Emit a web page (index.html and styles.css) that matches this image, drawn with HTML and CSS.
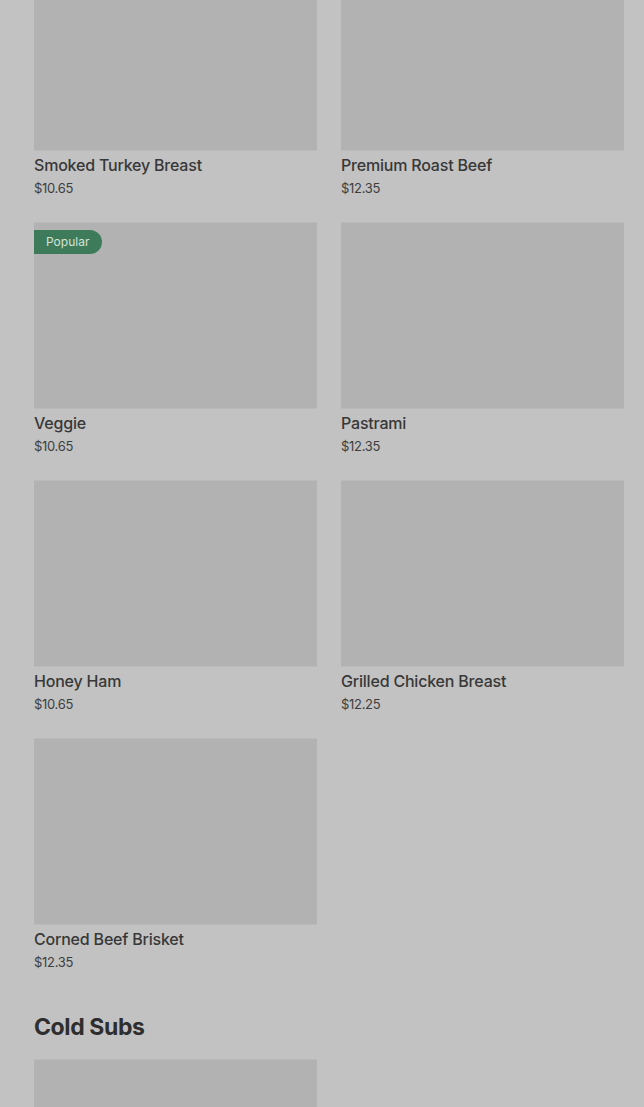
FILE: index.html
```html
<!DOCTYPE html>
<html lang="en">
<head>
    <meta charset="UTF-8">
    <meta name="viewport" content="width=device-width, initial-scale=1.0">
    <title>Menu</title>
    <link rel="stylesheet" href="styles.css">
</head>
<body>
    <div class="menu">
        <div class="grid">
            <div class="item">
                <div class="photo"></div>
                <div class="name">Smoked Turkey Breast</div>
                <div class="price">$10.65</div>
            </div>
            <div class="item">
                <div class="photo"></div>
                <div class="name">Premium Roast Beef</div>
                <div class="price">$12.35</div>
            </div>
            <div class="item">
                <div class="photo">
                    <span class="badge">Popular</span>
                </div>
                <div class="name">Veggie</div>
                <div class="price">$10.65</div>
            </div>
            <div class="item">
                <div class="photo"></div>
                <div class="name">Pastrami</div>
                <div class="price">$12.35</div>
            </div>
            <div class="item">
                <div class="photo"></div>
                <div class="name">Honey Ham</div>
                <div class="price">$10.65</div>
            </div>
            <div class="item">
                <div class="photo"></div>
                <div class="name">Grilled Chicken Breast</div>
                <div class="price">$12.25</div>
            </div>
            <div class="item">
                <div class="photo"></div>
                <div class="name">Corned Beef Brisket</div>
                <div class="price">$12.35</div>
            </div>
        </div>

        <h2 class="section-title">Cold Subs</h2>
        <div class="grid">
            <div class="item">
                <div class="photo"></div>
            </div>
        </div>
    </div>
</body>
</html>
```

FILE: styles.css
```css
body {
    background-color: #c2c2c2;
    color: #353535;
    font-family: Inter, "Liberation Sans", sans-serif;
    margin: 0;
    height: 1107px;
    overflow: hidden;
}
.menu {
    padding: 0 20px 0 34px;
    margin-top: -36px;
}
.grid {
    display: grid;
    grid-template-columns: 1fr 1fr;
    column-gap: 24px;
    row-gap: 24px;
}
.photo {
    position: relative;
    height: 187px;
    background-color: #b2b2b2;
    box-shadow: inset 0 1px 0 #bababa, inset 0 -1px 0 #bababa;
}
.badge {
    position: absolute;
    top: 8px;
    left: 0;
    height: 24px;
    line-height: 24px;
    padding: 0 13px 0 12px;
    font-size: 12px;
    color: #d3e3d9;
    background-color: #3e7b5a;
    border-radius: 0 12px 12px 0;
}
.name {
    margin-top: 2px;
    font-size: 16px;
    font-weight: 500;
    line-height: 24px;
    letter-spacing: -0.2px;
    color: #383838;
}
.price {
    margin-top: 1px;
    font-size: 13px;
    line-height: 20px;
    letter-spacing: -0.3px;
    color: #3e3e3e;
}
.section-title {
    margin: 39px 0 16px;
    font-size: 23px;
    font-weight: 700;
    line-height: 32px;
    letter-spacing: -0.4px;
    color: #2e2e2e;
}
```
